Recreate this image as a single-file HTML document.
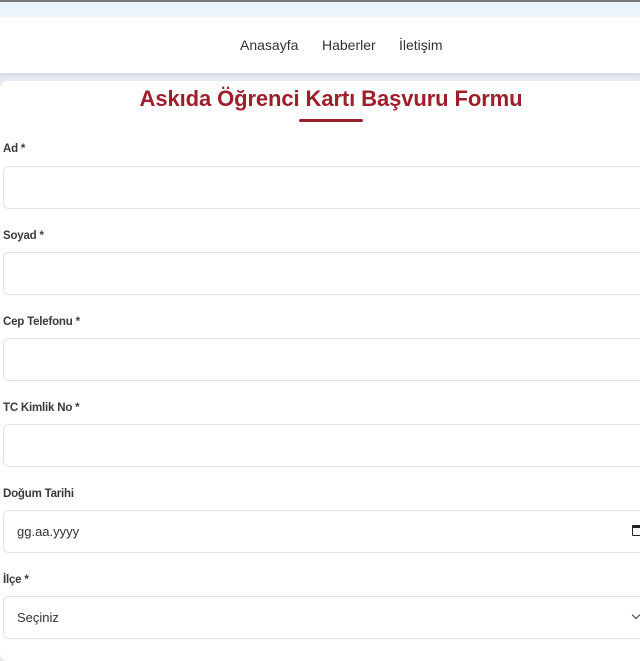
<!DOCTYPE html>
<html><head><meta charset="utf-8"><style>
*{box-sizing:border-box;margin:0;padding:0}
body{width:640px;height:640px;overflow:hidden;background:#e6ebf2;font-family:"Liberation Sans",sans-serif;position:relative}
.top{position:absolute;left:0;top:0;width:640px;height:17px;background:#eef4fb;border-top:2px solid #777}
.nav{position:absolute;left:0;top:17px;width:640px;height:56px;background:#fff;box-shadow:0 2px 4px rgba(0,0,0,.08);font-size:14px;color:#333;line-height:56px}
.nav span{position:absolute;top:0}
.card{position:absolute;left:0;top:81px;width:650px;height:580px;background:#fff;border-radius:8px}
h1{position:absolute;left:0;width:662px;top:86px;text-align:center;font-size:22px;font-weight:bold;color:#9e1f2c;letter-spacing:-0.1px}
.ul{position:absolute;left:299px;top:119px;width:64px;height:3px;background:#9e1f2c;border-radius:2px}
.lab{position:absolute;left:3px;font-size:11.5px;font-weight:bold;color:#3a3a3a;letter-spacing:-0.2px}
.inp{position:absolute;left:3px;width:660px;height:43px;border:1px solid #e2e2e2;border-radius:6px;background:#fff;font-size:13px;color:#333;line-height:41px;padding-left:13px}
</style></head><body>
<div class="top"></div>
<div class="nav"><span style="left:240px">Anasayfa</span><span style="left:322px">Haberler</span><span style="left:399px">İletişim</span></div>
<div class="card"></div>
<h1>Askıda Öğrenci Kartı Başvuru Formu</h1>
<div class="ul"></div>
<div class="lab" style="top:143px">Ad *</div><div class="inp" style="top:166px"></div>
<div class="lab" style="top:230px">Soyad *</div><div class="inp" style="top:252px"></div>
<div class="lab" style="top:316px">Cep Telefonu *</div><div class="inp" style="top:338px"></div>
<div class="lab" style="top:402px">TC Kimlik No *</div><div class="inp" style="top:424px"></div>
<div class="lab" style="top:488px">Doğum Tarihi</div><div class="inp" style="top:510px">gg.aa.yyyy</div>
<div style="position:absolute;left:632px;top:525px;width:10px;height:11px;border:1.5px solid #222;border-top-width:3px;border-radius:1px"></div>
<div class="lab" style="top:574px">İlçe *</div><div class="inp" style="top:596px">Seçiniz</div>
<div style="position:absolute;left:633px;top:612px;width:6px;height:6px;border-right:1.3px solid #333;border-bottom:1.3px solid #333;transform:rotate(45deg)"></div>
</body></html>
